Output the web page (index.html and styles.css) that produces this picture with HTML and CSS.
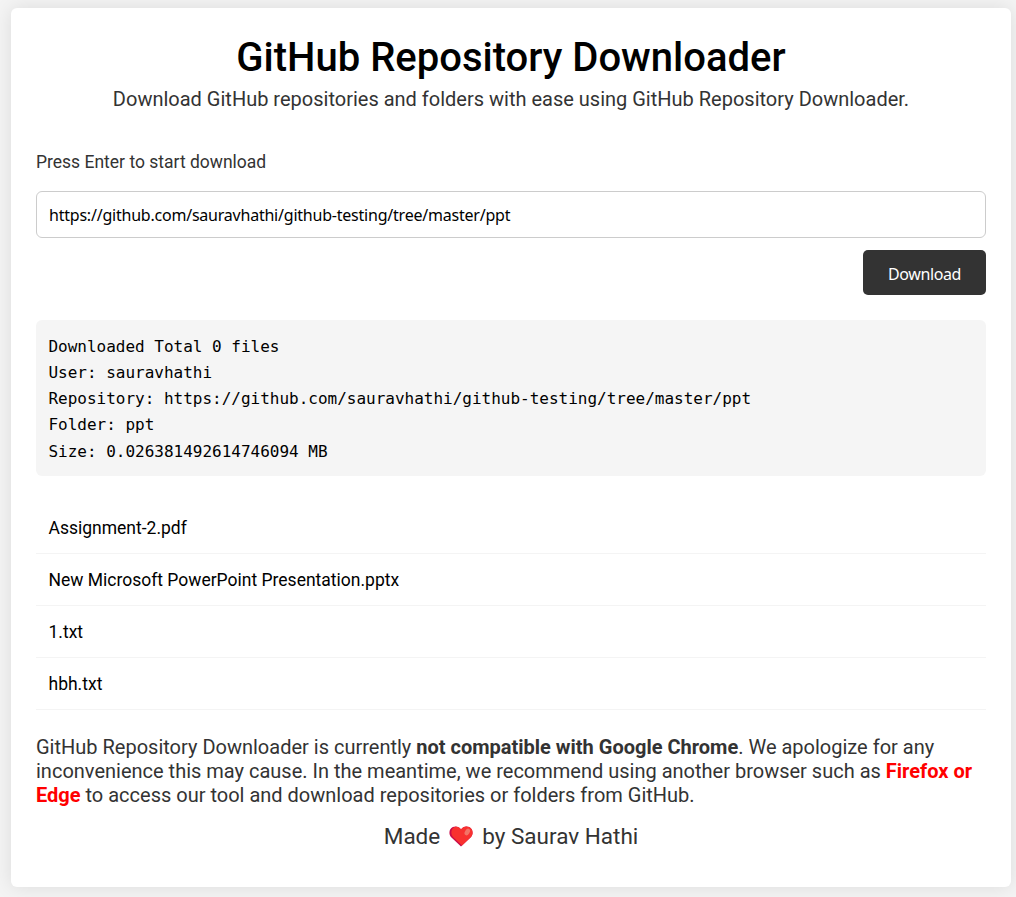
FILE: index.html
```html
<!DOCTYPE html>
<html lang="en">
<head>
    <meta charset="UTF-8">
    <meta name="viewport" content="width=device-width, initial-scale=1.0">
    <title>GitHub Repository Downloader</title>
    <link rel="stylesheet" href="styles.css">
</head>
<body>
    <div class="container">
        <h1 class="title">GitHub Repository Downloader</h1>
        <p class="subtitle">Download GitHub repositories and folders with ease using GitHub Repository Downloader.</p>

        <form class="download-form">
            <label class="form-label" for="url">Press Enter to start download</label>
            <input type="text" class="form-input" id="url" value="https://github.com/sauravhathi/github-testing/tree/master/ppt">
            <button type="button" class="download-btn">Download</button>
        </form>

        <pre class="output">Downloaded Total 0 files
User: sauravhathi
Repository: https://github.com/sauravhathi/github-testing/tree/master/ppt
Folder: ppt
Size: 0.026381492614746094 MB</pre>

        <ul class="files">
            <li>Assignment-2.pdf</li>
            <li>New Microsoft PowerPoint Presentation.pptx</li>
            <li>1.txt</li>
            <li>hbh.txt</li>
        </ul>

        <p class="notice">GitHub Repository Downloader is currently <strong>not compatible with Google Chrome</strong>. We apologize for any inconvenience this may cause. In the meantime, we recommend using another browser such as <strong class="red">Firefox or Edge</strong> to access our tool and download repositories or folders from GitHub.</p>

        <footer class="footer">
            <span>Made</span>
            <svg class="heart" viewBox="0 0 24 21">
                <path fill="#ca0b4a" d="M12 20.5 2.2 11.2C-.8 8 .2 2.7 3.8 1.1 7-.3 10.2.8 12 3.4 13.8.8 17-.3 20.2 1.1c3.6 1.6 4.6 6.9 1.6 10.1z"/>
                <path fill="#f8312f" d="M13 19.5 3.9 10.9C1.5 8.2 1.9 3.2 5.2 1.3 8 .1 10.7 1.2 12 3.4 13.8.8 17-.3 20.2 1.1c3.6 1.6 4.6 6.9 1.6 10.1z"/>
                <ellipse fill="#f37366" cx="18.3" cy="6" rx="2.3" ry="3.6" transform="rotate(32 18.3 6)"/>
            </svg>
            <span>by Saurav Hathi</span>
        </footer>
    </div>
</body>
</html>
```
FILE: styles.css
```css
* {
    margin: 0;
    padding: 0;
    box-sizing: border-box;
}

body {
    font-family: Roboto, sans-serif;
    background: #f4f4f4;
    color: #333;
    padding: 8px 5px 10px 11px;
}

.container {
    width: 1000px;
    height: 879px;
    padding: 26px 25px 25px;
    background: #fff;
    border-radius: 6px;
    box-shadow: 0 0 20px rgba(0, 0, 0, 0.1);
}

.title {
    font-size: 40px;
    font-weight: 500;
    line-height: 48px;
    text-align: center;
    color: #000;
}

.subtitle {
    margin-top: 5px;
    font-size: 20px;
    line-height: 24px;
    text-align: center;
}

.download-form {
    display: flex;
    flex-direction: column;
    margin-top: 39px;
}

.form-label {
    font-size: 17.5px;
    line-height: 24px;
}

.form-input {
    height: 47px;
    margin-top: 17px;
    padding: 0 12px;
    border: 1px solid #ccc;
    border-radius: 6px;
    background: #fff;
    color: #000;
    font-family: "Noto Sans", sans-serif;
    font-size: 16px;
    letter-spacing: -0.22px;
    outline: none;
}

.download-btn {
    align-self: flex-end;
    width: 123px;
    height: 45px;
    margin-top: 12px;
    padding-top: 2px;
    border: none;
    border-radius: 5px;
    background: #333;
    color: #fff;
    font-family: "Noto Sans", sans-serif;
    font-size: 16px;
    letter-spacing: -0.4px;
    cursor: pointer;
}

.output {
    height: 156px;
    margin-top: 25px;
    padding: 13.5px 12.5px;
    border-radius: 6px;
    background: #f5f5f5;
    color: #000;
    font-family: "DejaVu Sans Mono", monospace;
    font-size: 16px;
    line-height: 26.25px;
    letter-spacing: -0.008px;
}

.files {
    margin-top: 26px;
    list-style: none;
    color: #000;
}

.files li {
    height: 52px;
    padding: 1px 12.5px 0;
    border-bottom: 1px solid #f4f4f4;
    font-size: 17.5px;
    line-height: 50px;
}

.notice {
    margin-top: 25px;
    font-size: 20px;
    line-height: 24px;
}

.red {
    color: #f00;
}

.footer {
    display: flex;
    justify-content: center;
    align-items: center;
    gap: 9px;
    margin-top: 14px;
    font-size: 22.5px;
    line-height: 30px;
}

.heart {
    width: 24px;
    height: 21px;
    margin-top: 1px;
}
```
